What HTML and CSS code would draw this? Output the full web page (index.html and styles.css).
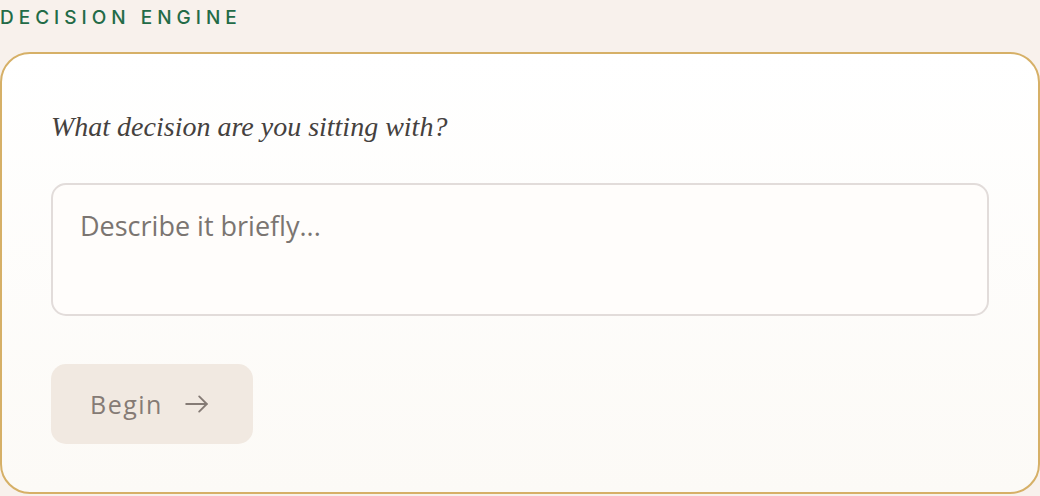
FILE: index.html
```html
<!DOCTYPE html>
<html lang="en">
<head>
    <meta charset="UTF-8">
    <meta name="viewport" content="width=device-width, initial-scale=1.0">
    <title>Decision Engine</title>
    <link rel="stylesheet" href="styles.css">
</head>
<body>

<div class="engine">
    <div class="engine-label">Decision Engine</div>

    <div class="engine-card">
        <h2 class="engine-question">What decision are you sitting with?</h2>
        <textarea class="engine-input" placeholder="Describe it briefly..."></textarea>
        <button class="begin-button" type="button">
            <span>Begin</span>
            <svg width="26" height="26" viewBox="0 0 24 24" fill="none" stroke="currentColor" stroke-width="1.7" stroke-linecap="round" stroke-linejoin="round">
                <path d="M2 12h19"/>
                <path d="M14 5l7 7-7 7"/>
            </svg>
        </button>
    </div>
</div>

</body>
</html>
```

FILE: styles.css
```css
body {
    margin: 0;
    background: #f8f1ec;
    font-family: "Open Sans", "DejaVu Sans", sans-serif;
}
.engine {
    display: flex;
    flex-direction: column;
}
.engine-label {
    height: 52px;
    padding-top: 6px;
    box-sizing: border-box;
    font-family: Inter, "Open Sans", sans-serif;
    font-size: 19px;
    font-weight: 500;
    letter-spacing: 5px;
    text-transform: uppercase;
    color: #236b47;
}
.engine-card {
    height: 442px;
    box-sizing: border-box;
    border: 2px solid #d6b067;
    border-radius: 30px;
    background: linear-gradient(#ffffff, #fcfaf6);
    padding: 50px 49px 0 49px;
}
.engine-question {
    margin: 0 0 33px 0;
    font-family: "Liberation Serif", serif;
    font-style: italic;
    font-weight: normal;
    font-size: 28px;
    line-height: 46px;
    color: #45413e;
}
.engine-input {
    display: block;
    width: 100%;
    height: 133px;
    box-sizing: border-box;
    border: 2px solid #e2dcda;
    border-radius: 15px;
    background: #fffdfb;
    padding: 22px 27px;
    font-family: "Open Sans", sans-serif;
    font-size: 27px;
    color: #3d3a38;
    resize: none;
    outline: none;
}
.engine-input::placeholder {
    color: #7b7571;
}
.begin-button {
    margin-top: 48px;
    width: 202px;
    height: 80px;
    border: none;
    border-radius: 15px;
    background: #f1e9e1;
    color: #857b75;
    font-family: "Open Sans", sans-serif;
    font-size: 25px;
    letter-spacing: 1.5px;
    display: flex;
    align-items: center;
    gap: 21px;
    padding: 0 0 0 39px;
}
```
